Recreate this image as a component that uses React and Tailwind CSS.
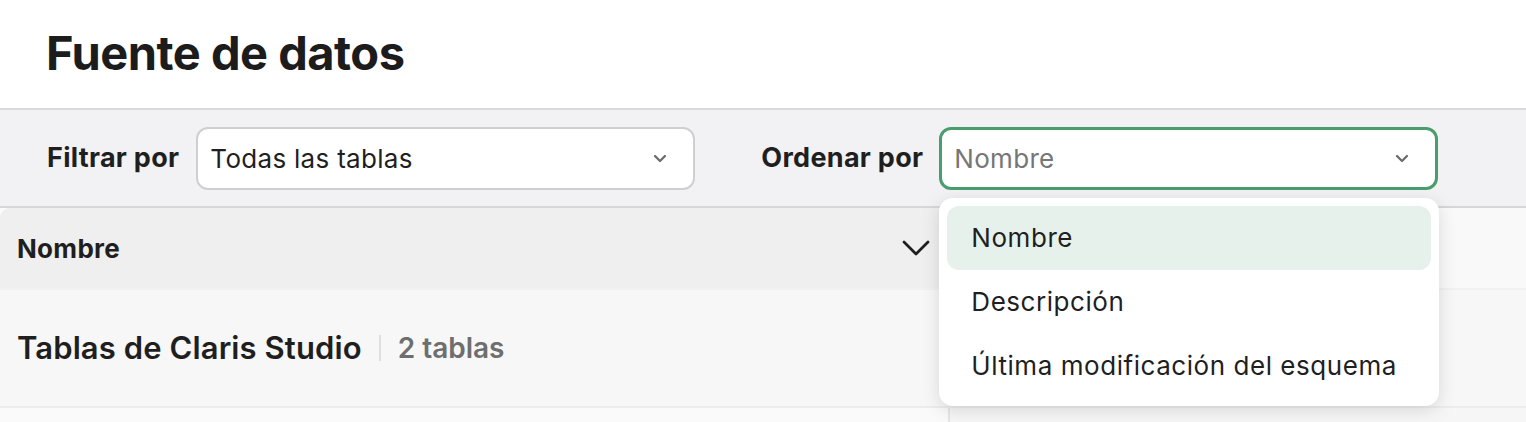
const SelectBox = ({ value, placeholder, focused, children }) => {
    return (
        <div className="relative">
            <div
                className={`flex items-center justify-between w-[499px] h-[63px] bg-white rounded-[12px] pl-[12px] pr-[26px] ${
                    focused
                        ? "border-[3px] border-[#4a9d6e]"
                        : "border-2 border-[#cfcfd1]"
                }`}
            >
                <span
                    className={`text-[26px] tracking-[0.3px] ${
                        placeholder ? "text-[#767676]" : "text-[#1f1f1f]"
                    }`}
                >
                    {value}
                </span>
                <svg
                    className="w-[14px] h-[9px] text-[#6a6a6a]"
                    viewBox="0 0 14 9"
                    fill="none"
                >
                    <path
                        d="M2 2l5 5 5-5"
                        stroke="currentColor"
                        strokeWidth="2.2"
                        strokeLinecap="round"
                        strokeLinejoin="round"
                    />
                </svg>
            </div>
            {children}
        </div>
    );
};

const options = ["Nombre", "Descripción", "Última modificación del esquema"];

export default function App() {
    return (
        <div className="w-[1526px] h-[422px] overflow-hidden bg-[#fafafa] font-['Inter',sans-serif] text-[#1f1f1f]">
            {/* Title */}
            <header className="h-[110px] bg-white border-b-2 border-[#dadadc] flex items-center pl-[46px] pb-[2px]">
                <h1 className="text-[47px] font-bold tracking-[-0.5px] text-[#1c1c1c]">
                    Fuente de datos
                </h1>
            </header>

            {/* Filters */}
            <div className="h-[98px] bg-[#f2f2f4] border-b-2 border-[#d6d6d8] flex items-center pl-[47px]">
                <span className="text-[27px] font-bold tracking-[0.3px] mr-[17px]">
                    Filtrar por
                </span>
                <SelectBox value="Todas las tablas" />
                <span className="text-[27px] font-bold tracking-[0.3px] ml-[66px] mr-[16px]">
                    Ordenar por
                </span>
                <SelectBox value="Nombre" placeholder focused>
                    <ul className="absolute z-10 left-0 top-[71px] w-[500px] bg-white rounded-[14px] p-[8px] shadow-[0_4px_18px_rgba(0,0,0,0.13)]">
                        {options.map((opt, i) => (
                            <li
                                key={opt}
                                className={`h-[64px] flex items-center pl-[24px] rounded-[12px] text-[26px] tracking-[0.55px] text-[#1f1f1f] ${
                                    i === 0 ? "bg-[#e7f1ec]" : ""
                                }`}
                            >
                                {opt}
                            </li>
                        ))}
                    </ul>
                </SelectBox>
            </div>

            {/* Table */}
            <div className="rounded-tl-[10px] overflow-hidden">
                <div className="flex h-[80px]">
                    <div className="w-[950px] bg-[#efefef] flex items-center justify-between pl-[17px] pr-[20px]">
                        <span className="text-[26px] font-bold tracking-[0.3px]">
                            Nombre
                        </span>
                        <svg
                            className="w-[28px] h-[16px] text-[#1f1f1f]"
                            viewBox="0 0 28 16"
                            fill="none"
                        >
                            <path
                                d="M2 2l12 12 12-12"
                                stroke="currentColor"
                                strokeWidth="2.8"
                                strokeLinecap="round"
                                strokeLinejoin="round"
                            />
                        </svg>
                    </div>
                    <div className="flex-1 bg-[#f9f9f9]"></div>
                </div>
                <div className="flex h-[120px] bg-[#f7f7f7] border-t-2 border-b-2 border-t-[#f1f1f1] border-b-[#ececec]">
                    <div className="w-[950px] flex items-center pl-[17px]">
                        <span className="text-[31px] font-semibold tracking-[0.1px]">
                            Tablas de Claris Studio
                        </span>
                        <span className="w-[2px] h-[26px] bg-[#e0e0e0] mx-[17px]"></span>
                        <span className="text-[28px] font-semibold text-[#6e6e6e]">
                            2 tablas
                        </span>
                    </div>
                    <div className="flex-1"></div>
                </div>
                <div className="flex h-[40px]">
                    <div className="w-[950px] border-r-2 border-[#e6e6e6]"></div>
                    <div className="flex-1 bg-[#f6f6f6]"></div>
                </div>
            </div>
        </div>
    );
}
